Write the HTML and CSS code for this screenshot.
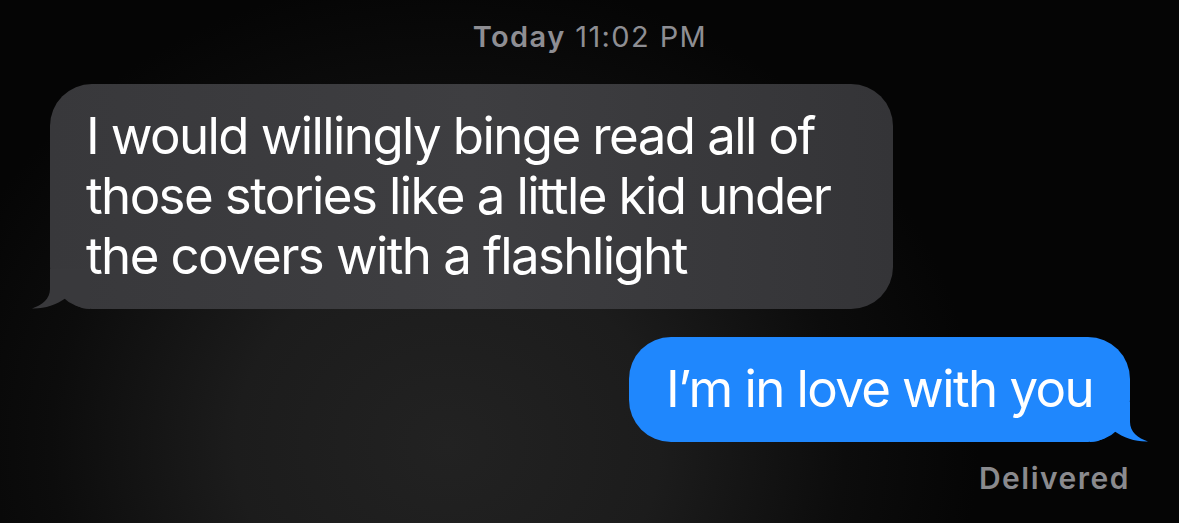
FILE: index.html
```html
<!DOCTYPE html>
<html lang="en">
<head>
    <meta charset="UTF-8">
    <meta name="viewport" content="width=device-width, initial-scale=1.0">
    <title>Messages</title>
    <link rel="stylesheet" href="styles.css">
</head>
<body>
    <div class="thread">
        <div class="stamp"><b>Today</b> 11:02 PM</div>

        <div class="row row-in">
            <div class="bubble bubble-in">
                I would willingly binge read all of those stories like a little kid under the covers with a flashlight
                <svg class="tail tail-in" width="60" height="40" viewBox="0 0 60 40">
                    <path d="M20 0 L20 20 C20 30 12 36 2 39.5 C14 40 26 36 36 29 C42 35 50 40 60 40 L60 0 Z"/>
                </svg>
            </div>
        </div>

        <div class="row row-out">
            <div class="bubble bubble-out">
                I’m in love with you
                <svg class="tail tail-out" width="60" height="40" viewBox="0 0 60 40">
                    <path d="M40 0 L40 20 C40 30 48 36 58 39.5 C46 40 34 36 24 29 C18 35 10 40 0 40 L0 0 Z"/>
                </svg>
            </div>
        </div>

        <div class="status">Delivered</div>
    </div>
</body>
</html>
```

FILE: styles.css
```css
html, body {
    height: 100%;
}
body {
    margin: 0;
    font-family: Inter, "Noto Sans", sans-serif;
    background: radial-gradient(ellipse 45% 90% at 38% 85%, #222222 0%, #1c1c1c 40%, #0c0c0c 75%, #050505 100%);
    background-color: #050505;
    color: #fff;
    overflow: hidden;
}
.thread {
    display: flex;
    flex-direction: column;
    padding: 0 49px 0 50px;
}
.stamp {
    text-align: center;
    font-size: 29px;
    line-height: 36px;
    letter-spacing: 1.4px;
    color: #8e8e93;
    padding-top: 19px;
    margin-bottom: 29px;
}
.stamp b {
    font-weight: 600;
}
.row {
    display: flex;
}
.row-in {
    justify-content: flex-start;
}
.row-out {
    justify-content: flex-end;
    margin-top: 28px;
}
.bubble {
    position: relative;
    z-index: 0;
    font-size: 51px;
    line-height: 60px;
    letter-spacing: -1.6px;
    padding: 22px 36px 23px;
    border-radius: 42px;
}
.bubble-in {
    width: 843px;
    box-sizing: border-box;
    padding-right: 28px;
    background: linear-gradient(to right, #38383b 0%, #3e3e41 50%, #343437 100%);
}
.bubble-out {
    background: #1f87fd;
    padding-left: 37px;
    padding-right: 37px;
}
.tail {
    position: absolute;
    bottom: 0;
    z-index: -1;
}
.tail-in {
    left: -20px;
    fill: #39393c;
}
.tail-out {
    right: -20px;
    fill: #1f87fd;
}
.status {
    align-self: flex-end;
    font-size: 30px;
    font-weight: 600;
    letter-spacing: 1.5px;
    color: #8a8a8e;
    margin-top: 18px;
    margin-right: 0;
}
```
